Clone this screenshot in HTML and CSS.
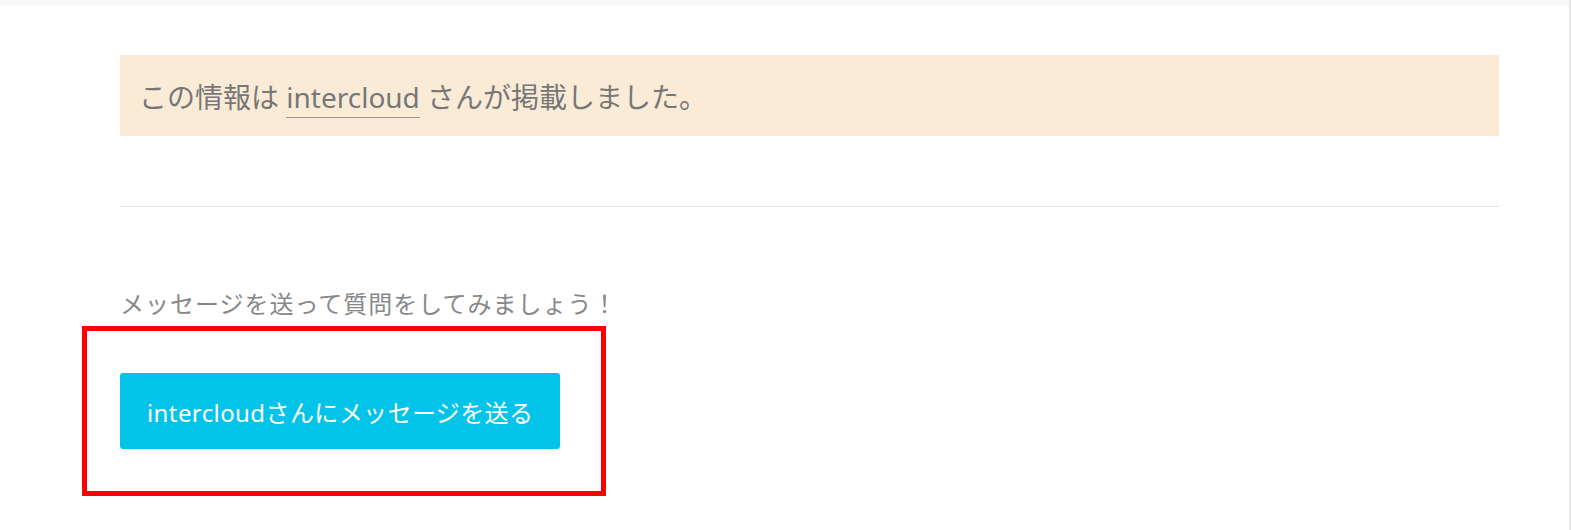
FILE: index.html
```html
<!DOCTYPE html>
<html lang="ja">
<head>
<meta charset="utf-8">
<title>intercloud</title>
<link rel="stylesheet" href="styles.css">
</head>
<body>
<div class="page">
  <div class="topband"></div>
  <main class="content">
    <div class="notice">この情報は <a class="user-link" href="#">intercloud</a> さんが掲載しました。</div>
    <hr class="divider">
    <p class="prompt">メッセージを送って質問をしてみましょう！</p>
    <div class="action">
      <a class="msg-btn" href="#">intercloudさんにメッセージを送る</a>
    </div>
  </main>
  <div class="highlight"></div>
</div>
</body>
</html>
```
FILE: styles.css
```css
html, body {
  margin: 0;
  padding: 0;
  background: #fff;
}
body {
  font-family: "Noto Sans", "Noto Sans CJK JP", sans-serif;
  color: #777;
}
.page {
  position: relative;
  width: 1569px;
  height: 530px;
  border-right: 2px solid #e6e6e6;
  box-sizing: content-box;
}
.topband {
  height: 5px;
  background: #f8f8f8;
}
.content {
  padding: 50px 70px 0 120px;
}
.notice {
  background: #faebd7;
  height: 81px;
  box-sizing: border-box;
  padding: 0 19px;
  display: flex;
  align-items: center;
  font-size: 28px;
  color: #777;
  white-space: pre;
}
.user-link {
  color: #777;
  text-decoration: none;
  border-bottom: 1px solid #999;
  padding-bottom: 1px;
  margin-top: 4px;
}
.divider {
  border: 0;
  border-top: 1px solid #e6e6e6;
  margin: 70px 0 0;
  height: 0;
}
.prompt {
  margin: 82px 0 0;
  font-size: 24px;
  letter-spacing: 1px;
  line-height: 30px;
  color: #888;
}
.action {
  margin-top: 54px;
}
.msg-btn {
  display: inline-flex;
  align-items: center;
  height: 76px;
  padding: 0 27px;
  box-sizing: border-box;
  background: #04c3e9;
  border-radius: 3px;
  color: #fff;
  font-size: 24px;
  letter-spacing: 0.4px;
  text-decoration: none;
}
.highlight {
  position: absolute;
  left: 82px;
  top: 326px;
  width: 524px;
  height: 170px;
  box-sizing: border-box;
  border: 5px solid #ff0000;
  pointer-events: none;
}
```
